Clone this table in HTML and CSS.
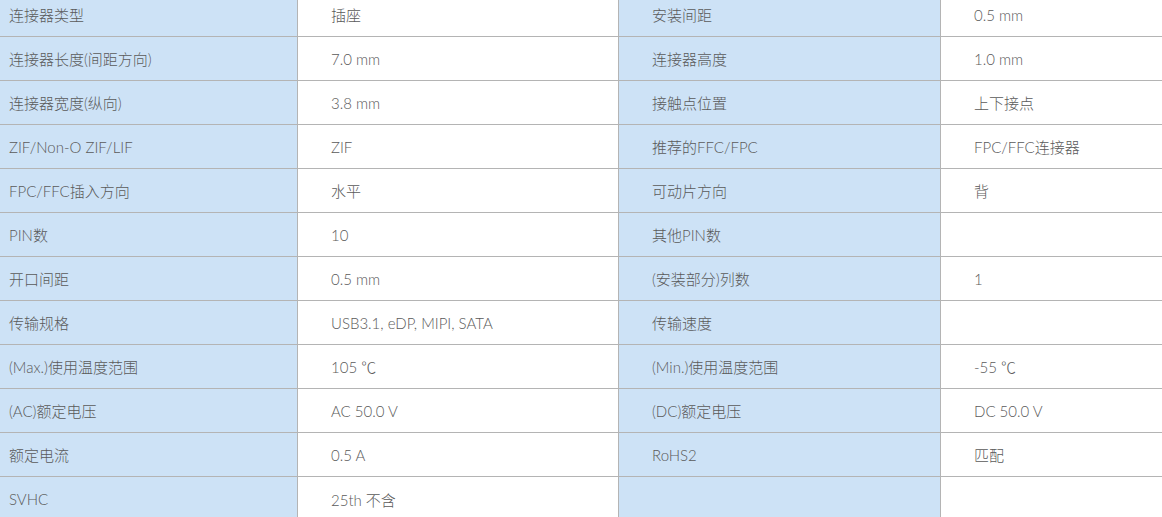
FILE: index.html
```html
<!DOCTYPE html>
<html lang="zh-CN">
<head>
<meta charset="utf-8">
<title>连接器规格</title>
<link rel="stylesheet" href="styles.css">
</head>
<body>
<table class="spec">
  <colgroup>
    <col class="c1"><col class="c2"><col class="c3"><col class="c4">
  </colgroup>
  <tbody>
    <tr><th>连接器类型</th><td>插座</td><th>安装间距</th><td>0.5 mm</td></tr>
    <tr><th>连接器长度(间距方向)</th><td>7.0 mm</td><th>连接器高度</th><td>1.0 mm</td></tr>
    <tr><th>连接器宽度(纵向)</th><td>3.8 mm</td><th>接触点位置</th><td>上下接点</td></tr>
    <tr><th>ZIF/Non-O ZIF/LIF</th><td>ZIF</td><th>推荐的FFC/FPC</th><td>FPC/FFC连接器</td></tr>
    <tr><th>FPC/FFC插入方向</th><td>水平</td><th>可动片方向</th><td>背</td></tr>
    <tr><th>PIN数</th><td>10</td><th>其他PIN数</th><td></td></tr>
    <tr><th>开口间距</th><td>0.5 mm</td><th>(安装部分)列数</th><td>1</td></tr>
    <tr><th>传输规格</th><td>USB3.1, eDP, MIPI, SATA</td><th>传输速度</th><td></td></tr>
    <tr><th>(Max.)使用温度范围</th><td>105 ℃</td><th>(Min.)使用温度范围</th><td>-55 ℃</td></tr>
    <tr><th>(AC)额定电压</th><td>AC 50.0 V</td><th>(DC)额定电压</th><td>DC 50.0 V</td></tr>
    <tr><th>额定电流</th><td>0.5 A</td><th>RoHS2</th><td>匹配</td></tr>
    <tr><th>SVHC</th><td>25th 不含</td><th></th><td></td></tr>
  </tbody>
</table>
</body>
</html>
```
FILE: styles.css
```css
html, body {
  margin: 0;
  padding: 0;
  background: #ffffff;
  overflow: hidden;
}

.spec {
  border-collapse: separate;
  border-spacing: 0;
  table-layout: fixed;
  width: 1162px;
  margin-top: -7px;
  font-family: "Lato", "Noto Sans CJK SC", sans-serif;
  font-size: 15px;
  color: #5a5a5a;
}

.c1 { width: 298px; }
.c2 { width: 321px; }
.c3 { width: 322px; }
.c4 { width: 221px; }

.spec th,
.spec td {
  height: 44px;
  padding: 0 0 0 33px;
  border-bottom: 1px solid #b4b4b4;
  border-right: 1px solid #b4b4b4;
  text-align: left;
  font-weight: 300;
  vertical-align: middle;
  white-space: nowrap;
  box-sizing: border-box;
}

.spec th {
  background: #cde2f6;
}

.spec td {
  background: #ffffff;
}

.spec th:first-child {
  padding-left: 9px;
}

.spec td:last-child {
  border-right: none;
}

.spec tr:last-child th,
.spec tr:last-child td {
  border-bottom: none;
}
```
